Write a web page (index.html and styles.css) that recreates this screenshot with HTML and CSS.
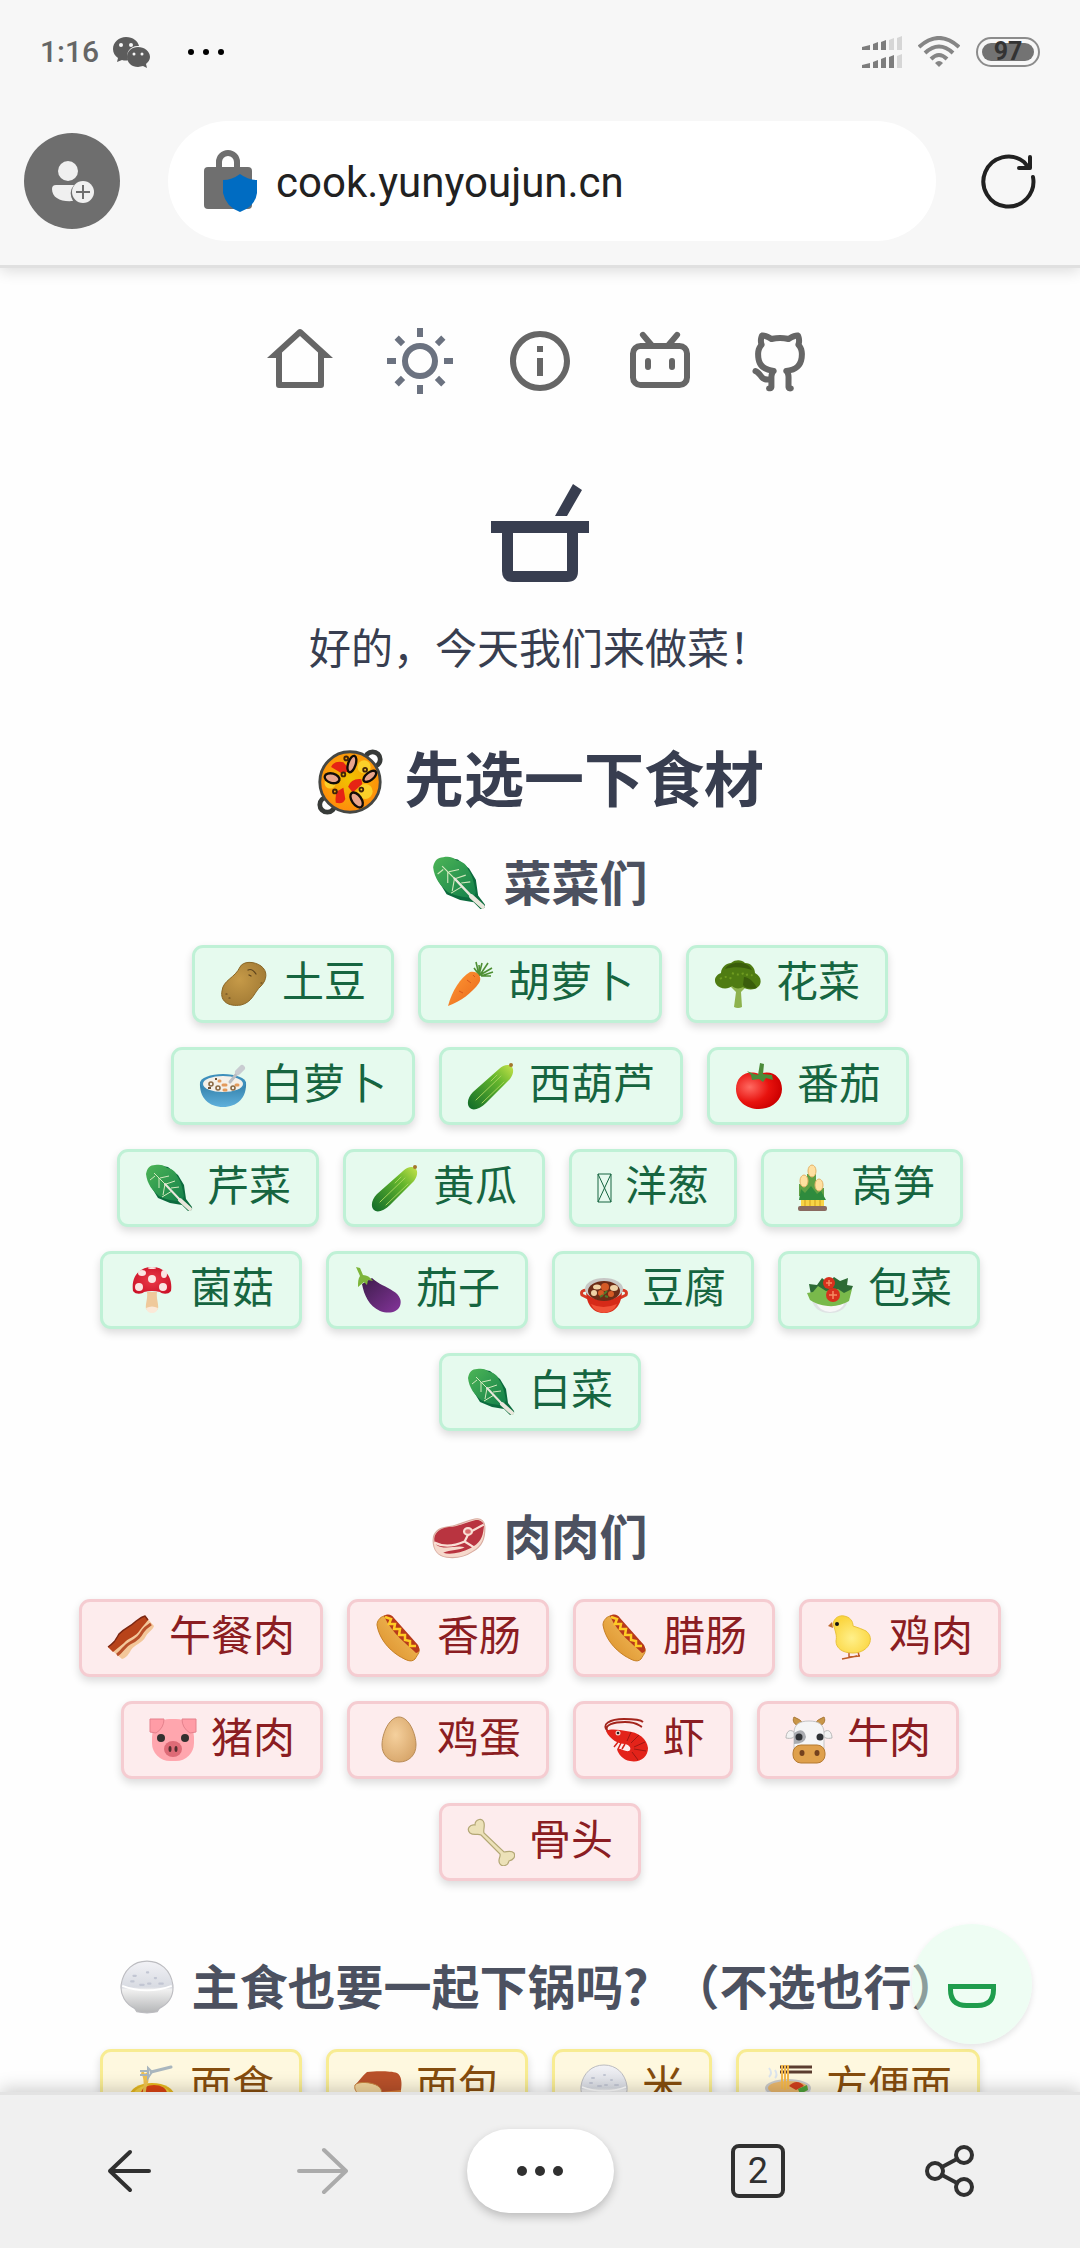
FILE: index.html
```
<!DOCTYPE html>
<html lang="zh-CN">
<head>
<meta charset="utf-8">
<meta name="viewport" content="width=device-width, initial-scale=1">
<title>好的，今天我们来做菜！</title>
<link rel="stylesheet" href="styles.css">
</head>
<body>
<svg class="sprite" aria-hidden="true">
  <defs>
    <linearGradient id="g-leaf" x1="0" y1="0" x2="1" y2="1"><stop offset="0" stop-color="#4db556"/><stop offset="1" stop-color="#13804a"/></linearGradient>
    <radialGradient id="g-potato" cx=".4" cy=".4" r=".7"><stop offset="0" stop-color="#c69a48"/><stop offset="1" stop-color="#9f7833"/></radialGradient>
    <linearGradient id="g-carrot" x1="0" y1="0" x2="1" y2="1"><stop offset="0" stop-color="#ff9a35"/><stop offset="1" stop-color="#e9661a"/></linearGradient>
    <linearGradient id="g-cuke" x1="1" y1="0" x2="0" y2="1"><stop offset="0" stop-color="#c6e34a"/><stop offset=".35" stop-color="#63b52c"/><stop offset="1" stop-color="#0f6a2a"/></linearGradient>
    <radialGradient id="g-tomato" cx=".3" cy=".4" r=".7"><stop offset="0" stop-color="#ff6a62"/><stop offset=".6" stop-color="#e8120e"/><stop offset="1" stop-color="#cc0000"/></radialGradient>
    <linearGradient id="g-bowl" x1="0" y1="0" x2="0" y2="1"><stop offset="0" stop-color="#2f7ba4"/><stop offset="1" stop-color="#5fb0dc"/></linearGradient>
    <linearGradient id="g-bun" x1="1" y1="0" x2="0" y2="1"><stop offset="0" stop-color="#f7c765"/><stop offset="1" stop-color="#d98a26"/></linearGradient>
    <radialGradient id="g-chick" cx=".5" cy=".6" r=".6"><stop offset="0" stop-color="#fff08a"/><stop offset="1" stop-color="#fbd43c"/></radialGradient>
    <radialGradient id="g-egg" cx=".4" cy=".4" r=".7"><stop offset="0" stop-color="#f5d09d"/><stop offset="1" stop-color="#d6a468"/></radialGradient>
    <radialGradient id="g-paella" cx=".5" cy=".45" r=".55"><stop offset="0" stop-color="#f0c400"/><stop offset="1" stop-color="#ff8a0c"/></radialGradient>
    <linearGradient id="g-rice" x1="0" y1="0" x2="0" y2="1"><stop offset="0" stop-color="#f2f2f6"/><stop offset=".5" stop-color="#d8dbe2"/><stop offset=".55" stop-color="#f1f1f1"/><stop offset="1" stop-color="#b4b5b7"/></linearGradient>
    <linearGradient id="g-eggplant" x1="0" y1="0" x2="1" y2="1"><stop offset="0" stop-color="#3d1d4b"/><stop offset="1" stop-color="#84349a"/></linearGradient>
    <radialGradient id="g-cap" cx=".5" cy=".5" r=".6"><stop offset="0" stop-color="#ea3a48"/><stop offset="1" stop-color="#cc1228"/></radialGradient>
  </defs>
  <symbol id="leaf" viewBox="0 0 48 48">
    <path fill="#0b6b3d" d="M13 1l10 2 10 8 6 10 2 14 6 8q1 4-4 4l-6-6-12-2-12-5-8-13z"/>
    <path fill="url(#g-leaf)" d="M1 10C2 4 5 1 10 1c5-1 9 0 12 3 6 1 9 4 10 8 4 5 5 11 7 20l-2 5c-9 0-18-2-23-5C8 27 2 20 1 10z"/>
    <path fill="none" stroke="#d3e8bd" stroke-width="1" d="M9 9l27 27M14 14l0 10M20 20l-2 11M27 27l-10 6M15 14l9-2M21 20l9-3M26 24l8-1M10 12l-5 4"/>
    <path fill="none" stroke="#e9e7dc" stroke-width="4" stroke-linecap="round" d="M35 36l10 9"/>
    <path fill="none" stroke="#e9e7dc" stroke-width="2" stroke-linecap="round" d="M20 20l16 17"/>
  </symbol>
  <symbol id="potato" viewBox="0 0 48 48">
    <path fill="url(#g-potato)" stroke="#8a6626" d="M20 7C23 1 34 1 41 6c7 5 6 14 0 20-7 6-8 16-20 19C8 47 0 41 2 31 3 20 15 18 20 7z"/>
    <path fill="none" stroke="#5d431c" stroke-width="1.2" stroke-linecap="round" d="M28 10q4-2 8 4M29 15l2 1M41 23h1M6 34h1M9 38h1"/>
  </symbol>
  <symbol id="carrot" viewBox="0 0 48 48">
    <path fill="none" stroke="#4e8f33" stroke-width="1.6" d="M33 15L30 2M33 15L36 3M34 15L42 3M34 15l12-7M35 16l12-4M34 16l-6-8M35 16l10 0M34 15L33 5"/>
    <path fill="url(#g-carrot)" d="M2 46C6 31 14 18 24 12c7-2 13 5 9 11C26 33 15 41 2 46z"/>
    <path fill="none" stroke="#d7571a" d="M21 20l4 3M13 31l4 2M27 15l2 2"/>
  </symbol>
  <symbol id="broccoli" viewBox="0 0 48 48">
    <path fill="#8db24d" d="M14 24l8 8-2 15q4 2 8 0l-1-15 8-8z"/>
    <path fill="#4f7c12" d="M2 24c-3-5 1-10 5-11 0-6 6-10 10-10 5-4 11-3 14 0 6 0 10 5 10 10 6 3 7 9 4 13-4 5-13 4-16 1-3 2-8 2-11-1-4 4-13 3-16-2z"/>
    <path fill="#3a5d0c" d="M11 9c4-8 23-9 27 1-8-3-18-4-27-1zM30 17c5 0 10 5 13 11-5 1-11 1-14-3z"/>
    <path fill="none" stroke="#6f9c20" stroke-width="2" stroke-dasharray="2 3" d="M6 19q6-4 12 0M18 13q6 3 12 0M32 15q5-2 9 3"/>
  </symbol>
  <symbol id="cereal" viewBox="0 0 48 48">
    <path fill="url(#g-bowl)" d="M1 20c-1 16 9 25 23 25s24-9 23-25z"/>
    <ellipse cx="24" cy="21" rx="23" ry="9" fill="#3d8fbc"/>
    <ellipse cx="24" cy="22" rx="20" ry="8" fill="#f4f0e9"/>
    <g fill="none" stroke="#8a6a45" stroke-width="1.6"><circle cx="12" cy="22" r="2"/><circle cx="19" cy="26" r="2"/><circle cx="34" cy="26" r="2"/></g>
    <path stroke="#e39a5b" stroke-width="3" stroke-linecap="round" d="M24 23h3M25 28h2M37 23h2M20 19h1"/>
    <path stroke="#6b5139" stroke-width="2" d="M9 26h3M16 17h2"/>
    <path stroke="#b9bdc2" stroke-width="3" stroke-linecap="round" d="M31 20l9-11"/>
    <path stroke="#c9ccd1" stroke-width="6" stroke-linecap="round" d="M39 10l4-4"/>
  </symbol>
  <symbol id="cuke" viewBox="0 0 48 48">
    <path fill="url(#g-cuke)" d="M3 46c-4-4-2-11 3-16L32 7c4-4 9-5 12-3s3 8-1 13L19 41C13 47 6 49 3 46z"/>
    <path fill="none" stroke="#a5d35a" stroke-linecap="round" d="M9 38L34 14M15 41L37 20M24 19l6-6"/>
    <circle cx="44" cy="3" r="2" fill="#a5762c"/>
  </symbol>
  <symbol id="tomato" viewBox="0 0 48 48">
    <path fill="url(#g-tomato)" d="M24 12c14-5 23 4 23 15S37 47 24 47 1 39 1 27 11 7 24 12z"/>
    <path fill="#4c8c3a" d="M23 13L25 1l4 1-1 10 9 1 1 5-7-2-3 4-4-3-7 1-1-5-4-4 7 3z"/>
  </symbol>
  <symbol id="kadomatsu" viewBox="0 0 48 48">
    <path fill="#5fa044" d="M18 10h9v20h-9zM10 20h8v12h-8zM27 24h8v10h-8z"/>
    <g fill="#ffe0a0" stroke="#e5b266"><ellipse cx="23" cy="7" rx="4" ry="6"/><ellipse cx="15" cy="17" rx="4" ry="6"/><ellipse cx="30" cy="21" rx="4" ry="6"/></g>
    <path fill="#2e8b3d" d="M12 25l4 4 6-7 6 8 4-3 5 9H10z"/>
    <path fill="#f8d446" d="M12 36h23v7H12z"/>
    <path stroke="#d39e1d" d="M16 36v7M21 36v7M26 36v7M31 36v7"/>
    <rect x="9" y="42" width="29" height="5" rx="2" fill="#8a6a60"/>
  </symbol>
  <symbol id="mushroom" viewBox="0 0 48 48">
    <path fill="#efc99b" d="M19 26h10c-1 7 2 12 1 17q-6 6-12 0c-1-5 2-10 1-17z"/>
    <path fill="#fbe9d8" d="M18 42q6-3 12 0-1 5-6 5t-6-5z"/>
    <path fill="url(#g-cap)" d="M5 25C3 11 11 1 24 1s21 10 19 24c-3 4-9 3-11 1q-8-2-16 0c-2 2-8 3-11-1z"/>
    <g fill="#fbe5e2"><circle cx="24" cy="13" r="4"/><circle cx="11" cy="21" r="4"/><circle cx="35" cy="21" r="4"/><ellipse cx="14" cy="7" rx="4" ry="3"/><ellipse cx="36" cy="8" rx="3" ry="4"/><ellipse cx="24" cy="2" rx="4" ry="1"/></g>
  </symbol>
  <symbol id="eggplant" viewBox="0 0 48 48">
    <path fill="url(#g-eggplant)" d="M8 18l10-6c6 6 14 8 21 13 7 4 9 10 7 15-3 7-12 8-20 5C15 40 10 29 8 18z"/>
    <path fill="#7db53a" d="M2 1l4 1 3 7c4 0 7 2 10 6l-5-1-1 5-3-3-6 5c0-5 0-8 2-11z"/>
  </symbol>
  <symbol id="hotpot" viewBox="0 0 48 48">
    <path fill="none" stroke="#d63a24" stroke-width="3" d="M7 24q-7 0-5 5l6 3M41 24q7 0 5 5l-6 3"/>
    <path fill="#d62a18" d="M6 24c0 16 8 23 18 23s18-7 18-23z"/>
    <path fill="#f05238" d="M11 38q12 6 26 0-3 8-13 9-10-1-13-9z"/>
    <ellipse cx="24" cy="23" rx="19" ry="11" fill="#c7c7c5"/>
    <ellipse cx="24" cy="25" rx="16" ry="10" fill="#6c2c17"/>
    <g fill="#efd2a6"><ellipse cx="17" cy="21" rx="4" ry="2.500"/><ellipse cx="34" cy="22" rx="4" ry="3"/><circle cx="14" cy="27" r="3"/></g>
    <g fill="#d55a25"><circle cx="25" cy="21" r="4"/><circle cx="31" cy="28" r="3"/><circle cx="21" cy="27" r="3"/></g>
    <path stroke="#4f7a2d" stroke-width="2" d="M20 31l3-2M27 25l-3 3M28 31l-3-1"/>
  </symbol>
  <symbol id="salad" viewBox="0 0 48 48">
    <path fill="#dfe3e4" d="M5 30q2 17 19 17t19-17z"/>
    <path fill="#f7f7f7" d="M10 36q14 8 29 0-3 9-15 10-11-1-14-10z"/>
    <path fill="#2d6b35" d="M3 18l8 1 5-7 6 5 6-6 6 4 8-3-1 7 6 1-4 9H5z"/>
    <path fill="#79b94b" d="M1 27l6-1 5-6 8 5 12-2 6 4 8-4-3 12q-10 6-21 5T4 34z"/>
    <g fill="#d8301d"><circle cx="23" cy="17" r="6"/><circle cx="27" cy="29" r="7"/></g>
    <path stroke="#f58c63" stroke-width="1.500" d="M20 17h6M23 14v6M23 29h8M27 25v8"/>
  </symbol>
  <symbol id="steak" viewBox="0 0 48 48">
    <path fill="#f6d9cc" stroke="#d9aca0" d="M1 27c0-7 5-11 13-12 10-1 14-5 24-7 6-1 9 2 9 8 0 9-2 16-11 21-6 4-15 6-23 5C6 41 1 36 1 27z"/>
    <path fill="#b93440" d="M2 25c1-6 6-9 13-10 9 0 14-4 23-6 5-1 9 2 8 7-1 9-3 13-12 18-8 4-18 6-24 4 6-3 15-2 19-5-8-2-18 3-25-2-2-2-2-4-2-6z"/>
    <path fill="none" stroke="#f9dfd5" stroke-width="2" d="M2 29c8 4 18 3 27-1l4-8 13-7M29 28l8 5"/>
    <ellipse cx="32" cy="19" rx="3.500" ry="3" fill="#d86c6c" stroke="#f9dfd5" stroke-width="2"/>
  </symbol>
  <symbol id="bacon" viewBox="0 0 48 48">
    <path fill="#f3c79a" d="M1 33c6-4 7-6 11-13 7-7 11-7 16-12 4-3 6-5 10-6l9 10c-1 4-5 5-8 10-4 8-11 8-15 14-2 4-5 8-9 9z"/>
    <path fill="#b8431a" d="M1 33c6-4 7-6 11-13 7-7 11-7 16-12 4-3 6-5 10-6l3 4c-3 4-5 6-8 10-4 7-12 8-16 13l-11 9z"/>
    <path fill="none" stroke="#7b2611" stroke-width="1.500" d="M1 33c6-4 7-6 11-13 7-7 11-7 16-12 4-3 6-5 10-6l3 4"/>
    <path fill="none" stroke="#b9502a" stroke-width="3" d="M10 41c6-4 7-9 13-12 8-4 10-7 13-12 3-4 5-5 8-7"/>
  </symbol>
  <symbol id="hotdog" viewBox="0 0 48 48">
    <path fill="url(#g-bun)" stroke="#c57f24" d="M9 2c3-1 6 0 8 3l26 28c3 4 0 7-3 12-4 4-9 1-16-3C13 35 4 24 2 11 2 7 5 3 9 2z"/>
    <path fill="#b83a1b" d="M9 2c4-3 8-1 10 2l24 27c2 4 2 7-2 8C32 30 17 20 9 2z"/>
    <path fill="none" stroke="#ffcb24" stroke-width="2.500" d="M10 3l6 2-2 5 6 0-1 5 6 0-1 6 6 0 0 5 5 1 0 5 6 0"/>
  </symbol>
  <symbol id="chick" viewBox="0 0 48 48">
    <path fill="none" stroke="#bf5d28" stroke-width="1.500" d="M22 38v5M31 37l1 5M15 45l15-3M22 43l11-1"/>
    <path fill="url(#g-chick)" stroke="#e9c23c" d="M6 10C7 4 12 1 17 2c6 1 9 5 9 10 6 2 9 3 13 5 4 3 5 7 4 11-2 7-9 11-17 11-11 0-17-5-17-12 1-5 0-8-3-17z"/>
    <path fill="#c06b2e" d="M5 8L1 12l5 2z"/>
    <circle cx="10" cy="10" r="2" fill="#111"/>
  </symbol>
  <symbol id="pig" viewBox="0 0 48 48">
    <rect x="3" y="3" width="42" height="42" rx="18" fill="#ffa6ae"/>
    <path fill="#ff9ca6" stroke="#e5828d" d="M1 3h14q0 9-8 14l-6-1zM47 3H33q0 9 8 14l6-1z"/>
    <circle cx="12" cy="22" r="4" fill="#33302f"/><circle cx="36" cy="22" r="4" fill="#33302f"/>
    <ellipse cx="24" cy="33" rx="9" ry="8" fill="#de6b77"/>
    <ellipse cx="21" cy="33" rx="1.500" ry="3" fill="#542f30"/><ellipse cx="27" cy="33" rx="1.500" ry="3" fill="#542f30"/>
  </symbol>
  <symbol id="egg" viewBox="0 0 48 48">
    <path fill="url(#g-egg)" stroke="#b98c57" d="M24 1c10 0 17 17 17 28 0 10-7 17-17 17S7 39 7 29C7 18 14 1 24 1z"/>
  </symbol>
  <symbol id="shrimp" viewBox="0 0 48 48">
    <path fill="none" stroke="#a3241c" stroke-width="1.800" d="M8 16C-2 8 10 3 23 3s18 2 19 3M6 14C4 9 12 6 24 6s13 3 17 5"/>
    <path fill="#e3231a" d="M5 15c5-3 14-1 20 0 13 1 21 8 22 17 0 9-8 15-18 13-7-1-12-7-13-12 4-1 8 3 12 2 3-2 1-6-4-7-6 0-15-4-19-13z"/>
    <path fill="none" stroke="#9f1712" d="M30 16l-4 9M38 19l-8 8M44 26l-11 5M45 35l-12-2M37 44l-6-8"/>
    <path fill="none" stroke="#d52018" stroke-width="1.500" d="M17 26l-4 5M20 27l-3 6M24 28l-3 5"/>
    <circle cx="17" cy="17" r="2.500" fill="#f6d5cc"/><circle cx="17" cy="17" r="1.300" fill="#222"/>
  </symbol>
  <symbol id="cow" viewBox="0 0 48 48">
    <path fill="#c99648" stroke="#a97837" d="M15 10C9 9 7 5 9 1q6 2 10 7zM33 10c6-1 8-5 6-9q-6 2-10 7z"/>
    <path fill="#f2f2f2" stroke="#b9b9b9" d="M9 16C4 12 1 17 1 22c5 1 8 0 9-3zM39 16c5-4 8 1 8 6-5 1-8 0-9-3z"/>
    <path fill="#f5f5f6" stroke="#c4c4c6" d="M9 34V17C9 8 15 5 24 5s15 3 15 12v17z"/>
    <path fill="#a9abb0" d="M9 17q10-7 12 4-1 7-12 7z"/>
    <circle cx="14" cy="21" r="3.500" fill="#2f3236"/><circle cx="35" cy="21" r="3.500" fill="#2f3236"/>
    <rect x="8" y="29" width="32" height="18" rx="8" fill="#dfa04c" stroke="#b57a31"/>
    <ellipse cx="17" cy="37" rx="2.500" ry="3" fill="#74411e"/><ellipse cx="32" cy="37" rx="2.500" ry="3" fill="#74411e"/>
  </symbol>
  <symbol id="bone" viewBox="0 0 48 48">
    <path fill="#ece1b8" stroke="#b3a775" stroke-width="1.200" d="M8 7C8 1 16-1 17 5c1 4-1 7 0 10l20 19c3 0 7-2 10 1 2 4-1 7-5 8-1 5-7 6-9 3-3-4 1-7 0-10L14 17c-3-2-7 1-11-2-4-4 0-9 5-8z"/>
  </symbol>
  <symbol id="rice" viewBox="0 0 48 48">
    <path fill="url(#g-rice)" stroke="#bcbcc0" d="M1 22C3 9 12 1 24 1s21 8 23 21c1 10-4 17-12 21l-2 3q-9 2-18 0l-2-3C5 39 0 31 1 22z"/>
    <path fill="none" stroke="#fff" stroke-width="1.500" d="M2 23q22 8 44 0"/>
    <path stroke="#c2c6d3" stroke-width="2" stroke-linecap="round" d="M12 14h2M10 19h2M18 22h3M25 21h2M35 21h3M31 16h1M24 11h1"/>
  </symbol>
  <symbol id="bread" viewBox="0 0 48 48">
    <path fill="#dc843d" d="M20 18h27v22L27 47z"/>
    <path fill="#b9512a" d="M2 20C5 17 9 11 13 8c9-1 24-1 30 1 5 3 5 11 4 17l-20 2z"/>
    <path fill="#f1d49c" stroke="#c8823f" d="M1 21c3-4 17-3 23 1 5 4 4 7 2 9v16H5V30c-3-2-5-5-4-9z"/>
  </symbol>
  <symbol id="pasta" viewBox="0 0 48 48">
    <ellipse cx="24" cy="33" rx="23" ry="14" fill="#e6b71f"/>
    <ellipse cx="24" cy="32" rx="19" ry="11" fill="#f3cf45"/>
    <ellipse cx="26" cy="29" rx="13" ry="8" fill="#dc4313"/>
    <path fill="none" stroke="#efc251" stroke-width="3" d="M14 8q5 6 2 22M18 9q3 5-1 14"/>
    <path fill="none" stroke="#a9b6be" stroke-width="2" d="M12 7h8M12 11h8M20 4v10l4-6z"/>
    <path stroke="#a9b6be" stroke-width="3" stroke-linecap="round" d="M23 8l20-5"/>
  </symbol>
  <symbol id="ramen" viewBox="0 0 48 48">
    <path fill="none" stroke="#dbe4ee" stroke-width="2" d="M5 4q4 5 0 9M11 6q3 5 0 8"/>
    <path stroke="#5b3d30" stroke-width="3" d="M16 3h32M16 8h32"/>
    <path fill="#e9e9e9" d="M1 24q2 23 23 23t23-23z"/>
    <ellipse cx="24" cy="24" rx="23" ry="9" fill="#c9c9c9"/>
    <ellipse cx="24" cy="24" rx="20" ry="7" fill="#e8b66c"/>
    <path fill="#cf3f1d" d="M25 22q8-8 15 0l-8 4z"/><path fill="#4fa23b" d="M34 25l9-4 1 5-8 4z"/>
    <path stroke="#f4b84a" stroke-width="2" d="M18 1v24M21 1v25M24 1v24"/>
  </symbol>
  <symbol id="paella" viewBox="0 0 72 72">
    <g fill="none" stroke="#373a38" stroke-width="5"><circle cx="60" cy="12" r="8"/><circle cx="12" cy="60" r="8"/></g>
    <circle cx="36" cy="36" r="32" fill="url(#g-paella)" stroke="#454744" stroke-width="3"/>
    <g fill="#fbd029"><circle cx="51" cy="20" r="7"/><circle cx="52" cy="46" r="8"/><circle cx="15" cy="37" r="6"/></g>
    <path fill="#e62414" d="M16 20q3-7 13-5l7 8q-8 6-12 2zM34 41q3-9 14-8l1 5-10 9zM22 46l7-4 2 12q-2 6-10 4-1-6 1-12z"/>
    <g fill="#e9a58c" stroke="#120c08" stroke-width="2.500"><ellipse cx="38" cy="17" rx="4" ry="9" transform="rotate(18 38 17)"/><ellipse cx="17" cy="32" rx="8" ry="5" transform="rotate(15 17 32)"/><ellipse cx="57" cy="30" rx="8" ry="4" transform="rotate(-38 57 30)"/><ellipse cx="43" cy="55" rx="5" ry="9" transform="rotate(-35 43 55)"/></g>
    <g fill="none" stroke="#41230a" stroke-width="2"><circle cx="32" cy="11" r="2"/><circle cx="52" cy="23" r="2"/><circle cx="20" cy="46" r="2"/><circle cx="48" cy="44" r="2"/><circle cx="29" cy="28" r="2"/></g>
  </symbol>
</svg>

<header class="top">
  <div class="status">
    <span class="clock">1:16</span>
    <svg class="wechat" viewBox="0 0 37 32" aria-hidden="true">
      <path fill="#5c5c5c" d="M13 1C6 1 0 6 0 13c0 4 2 7 5 9l-1 4 5-2q4 1 6 0c-3-8 3-15 11-14-1-5-6-9-13-9z"/>
      <path fill="#5c5c5c" d="M25 11c-6 0-11 4-11 10s5 10 11 10l5-1 4 2-1-4c2-2 4-4 4-7 0-6-6-10-12-10z"/>
      <g fill="#f7f7f7"><circle cx="8" cy="9" r="2"/><circle cx="18" cy="9" r="2"/><circle cx="21" cy="18" r="1.500"/><circle cx="29" cy="18" r="1.500"/></g>
    </svg>
    <svg class="more" viewBox="0 0 36 6" aria-hidden="true"><g fill="#000"><circle cx="3" cy="3" r="3"/><circle cx="18" cy="3" r="3"/><circle cx="33" cy="3" r="3"/></g></svg>
    <svg class="signal" viewBox="0 0 40 32" aria-hidden="true">
      <path fill="#7d7d7d" d="M0 11l8-2v5H0zM11 8l5-2v8h-5zM19 6l5-2v10h-5zM0 29l8-2v5H0zM11 26l5-2v8h-5zM19 23l5-2v11h-5zM27 21l5-2v13h-5z"/>
      <path fill="#d6d6d6" d="M27 4l5-2v12h-5zM35 2l5-2v14h-5zM35 20l5-2v14h-5z"/>
    </svg>
    <svg class="wifi" viewBox="0 0 42 32" aria-hidden="true">
      <g fill="none" stroke="#858585" stroke-width="4"><path d="M1 11Q21-7 41 11M7 17q14-13 28 0M13 23q8-8 16 0"/></g>
      <path fill="#858585" d="M17 27q4-4 8 0l-4 4z"/>
    </svg>
    <span class="battery"><span class="charge">97</span></span>
  </div>
  <div class="bar">
    <button class="avatar" aria-label="登录">
      <svg viewBox="0 0 96 96" aria-hidden="true">
        <circle cx="44" cy="38" r="10" fill="#f0f0f0"/>
        <path fill="#f0f0f0" d="M32 52h18q-6 7-1 16c-12 1-21-3-21-12q0-4 4-4z"/>
        <circle cx="59" cy="59" r="11" fill="#f0f0f0"/>
        <path stroke="#6e6e6e" stroke-width="2" d="M52 59h14M59 52v14"/>
      </svg>
    </button>
    <label class="address">
      <svg viewBox="0 0 54 64" aria-hidden="true">
        <path fill="none" stroke="#6f6f6f" stroke-width="6" d="M15 20v-7a9 9 0 0 1 18 0v7"/>
        <rect x="0" y="18" width="48" height="42" rx="4" fill="#6f6f6f"/>
        <path fill="#006cc2" d="M36 25q8 6 17 6v13q-2 14-17 19-14-5-17-19V31q9 0 17-6z"/>
      </svg>
      <input type="text" value="cook.yunyoujun.cn" aria-label="网址">
    </label>
    <button class="reload" aria-label="刷新">
      <svg viewBox="0 0 56 56" aria-hidden="true"><g fill="none" stroke="#212121" stroke-width="4" stroke-linecap="round" stroke-linejoin="round"><path d="M53 24A25 25 0 1 1 44 9l5 6"/><path d="M50 4v11H39"/></g></svg>
    </button>
  </div>
</header>

<main>
  <nav>
    <a href="#" aria-label="首页"><svg viewBox="0 0 24 24"><path d="M19 21H5a1 1 0 0 1-1-1v-9H1l10.327-9.388a1 1 0 0 1 1.346 0L23 11h-3v9a1 1 0 0 1-1 1M6 19h12V9.157l-6-5.454l-6 5.454z"/></svg></a>
    <a href="#" aria-label="主题" class="sun"><svg viewBox="0 0 24 24"><path d="M12 18a6 6 0 1 1 0-12a6 6 0 0 1 0 12m0-2a4 4 0 1 0 0-8a4 4 0 0 0 0 8M11 1h2v3h-2zm0 19h2v3h-2zM3.515 4.929l1.414-1.414L7.050 5.636L5.636 7.050zM16.950 18.364l1.414-1.414l2.121 2.121l-1.414 1.414zm2.121-14.850l1.414 1.415l-2.121 2.121l-1.414-1.414zM5.636 16.950l1.414 1.414l-2.121 2.121l-1.414-1.414zM23 11v2h-3v-2zM4 11v2H1v-2z"/></svg></a>
    <a href="#" aria-label="关于"><svg viewBox="0 0 24 24"><path d="M12 22C6.477 22 2 17.523 2 12S6.477 2 12 2s10 4.477 10 10s-4.477 10-10 10m0-2a8 8 0 1 0 0-16a8 8 0 0 0 0 16M11 7h2v2h-2zm0 4h2v6h-2z"/></svg></a>
    <a href="#" aria-label="哔哩哔哩"><svg viewBox="0 0 24 24"><g fill="none" stroke="currentColor" stroke-width="2"><rect x="3" y="7" width="18" height="13" rx="2.500"/><path stroke-linecap="round" d="M6.300 3.300L9 6.500M17.700 3.300L15 6.500M8 12v2M16 12v2"/></g></svg></a>
    <a href="#" aria-label="GitHub"><svg viewBox="0 0 24 24"><path d="M5.883 18.653c-.3-.2-.558-.455-.86-.816a50.320 50.320 0 0 1-.466-.579c-.463-.575-.755-.84-1.057-.949a1 1 0 0 1 .676-1.883c.752.27 1.261.735 1.947 1.588c-.094-.117.34.427.433.539c.19.227.33.365.44.438c.204.137.587.196 1.150.14c.023-.382.094-.753.202-1.095C5.380 15.310 3.700 13.396 3.700 9.640c0-1.240.37-2.356 1.058-3.292c-.218-.894-.185-1.975.302-3.192a1 1 0 0 1 .63-.582c.081-.024.127-.035.208-.047c.803-.123 1.937.17 3.415 1.096A11.731 11.731 0 0 1 12 3.315c.912 0 1.818.104 2.684.308c1.477-.933 2.613-1.226 3.422-1.096c.085.013.157.03.218.05a1 1 0 0 1 .616.58c.487 1.216.52 2.297.302 3.190c.691.936 1.058 2.045 1.058 3.293c0 3.757-1.674 5.665-4.642 6.392c.125.415.19.879.19 1.380a300.492 300.492 0 0 1-.012 2.716a1 1 0 0 1-.019 1.958c-1.139.228-1.983-.532-1.983-1.525l.002-.446l.005-.705c.005-.708.007-1.338.007-1.998c0-.697-.183-1.152-.425-1.360c-.661-.57-.326-1.655.54-1.752c2.967-.333 4.337-1.482 4.337-4.660c0-.955-.312-1.744-.913-2.404a1 1 0 0 1-.19-1.045c.166-.414.237-.957.096-1.614l-.01.003c-.491.139-1.110.44-1.858.949a1 1 0 0 1-.833.135A9.626 9.626 0 0 0 12 5.315c-.89 0-1.772.119-2.592.35a1 1 0 0 1-.83-.134c-.752-.507-1.374-.807-1.868-.947c-.144.653-.073 1.194.092 1.607a1 1 0 0 1-.189 1.045C6.016 7.890 5.700 8.694 5.700 9.640c0 3.172 1.371 4.328 4.322 4.660c.865.097 1.201 1.177.544 1.748c-.192.168-.429.732-.429 1.364v3.150c0 .986-.835 1.725-1.960 1.528a1 1 0 0 1-.04-1.962v-.99c-.91.061-1.662-.088-2.254-.485"/></svg></a>
  </nav>

  <svg class="logo" viewBox="0 0 98 98" aria-hidden="true">
    <path fill="currentColor" d="M82 0l9 6-15 26H64zM0 37h98v12H87v38q0 11-11 11H22q-11 0-11-11V49H0zm22 12v38h54V49z"/>
  </svg>
  <p class="intro">好的，今天我们来做菜！</p>
  <h1><svg><use href="#paella"/></svg>先选一下食材</h1>

  <section class="vegetable">
    <h2><svg><use href="#leaf"/></svg>菜菜们</h2>
    <div class="chips">
      <button><svg><use href="#potato"/></svg><span>土豆</span></button>
      <button><svg><use href="#carrot"/></svg><span>胡萝卜</span></button>
      <button><svg><use href="#broccoli"/></svg><span>花菜</span></button>
      <button><svg><use href="#cereal"/></svg><span>白萝卜</span></button>
      <button><svg><use href="#cuke"/></svg><span>西葫芦</span></button>
      <button><svg><use href="#tomato"/></svg><span>番茄</span></button>
      <button><svg><use href="#leaf"/></svg><span>芹菜</span></button>
      <button><svg><use href="#cuke"/></svg><span>黄瓜</span></button>
      <button><svg class="missing" viewBox="0 0 15 30"><path fill="none" stroke="currentColor" d="M1 1h13v28H1zL14 29M14 1L1 29"/></svg><span>洋葱</span></button>
      <button><svg><use href="#kadomatsu"/></svg><span>莴笋</span></button>
      <button><svg><use href="#mushroom"/></svg><span>菌菇</span></button>
      <button><svg><use href="#eggplant"/></svg><span>茄子</span></button>
      <button><svg><use href="#hotpot"/></svg><span>豆腐</span></button>
      <button><svg><use href="#salad"/></svg><span>包菜</span></button>
      <button><svg><use href="#leaf"/></svg><span>白菜</span></button>
    </div>
  </section>

  <section class="meat">
    <h2><svg><use href="#steak"/></svg>肉肉们</h2>
    <div class="chips">
      <button><svg><use href="#bacon"/></svg><span>午餐肉</span></button>
      <button><svg><use href="#hotdog"/></svg><span>香肠</span></button>
      <button><svg><use href="#hotdog"/></svg><span>腊肠</span></button>
      <button><svg><use href="#chick"/></svg><span>鸡肉</span></button>
      <button><svg><use href="#pig"/></svg><span>猪肉</span></button>
      <button><svg><use href="#egg"/></svg><span>鸡蛋</span></button>
      <button><svg><use href="#shrimp"/></svg><span>虾</span></button>
      <button><svg><use href="#cow"/></svg><span>牛肉</span></button>
      <button><svg><use href="#bone"/></svg><span>骨头</span></button>
    </div>
  </section>

  <section class="staple">
    <h2><svg><use href="#rice"/></svg>主食也要一起下锅吗？（不选也行）</h2>
    <div class="chips">
      <button><svg><use href="#pasta"/></svg><span>面食</span></button>
      <button><svg><use href="#bread"/></svg><span>面包</span></button>
      <button><svg><use href="#rice"/></svg><span>米</span></button>
      <button><svg><use href="#ramen"/></svg><span>方便面</span></button>
    </div>
  </section>
</main>

<button class="fab" aria-label="查看菜谱">
  <svg viewBox="0 0 48 24" aria-hidden="true"><path fill="none" stroke="#1f9d4d" stroke-width="5" d="M2.500 2.500h43v3q0 16-16 16h-11q-16 0-16-16z"/></svg>
</button>

<footer class="toolbar">
  <button aria-label="后退"><svg class="back" viewBox="0 0 48 48"><path d="M43 24H4M24 5L4 24l20 19"/></svg></button>
  <button aria-label="前进"><svg class="forward" viewBox="0 0 52 48"><path d="M3 24h47M28 3l22 21-22 21"/></svg></button>
  <button class="menu" aria-label="菜单"><svg viewBox="0 0 46 10"><g><circle cx="5" cy="5" r="5"/><circle cx="23" cy="5" r="5"/><circle cx="41" cy="5" r="5"/></g></svg></button>
  <button aria-label="标签页"><span class="tabs">2</span></button>
  <button aria-label="分享"><svg class="share" viewBox="0 0 50 54"><g><circle cx="10" cy="27" r="8"/><circle cx="39" cy="11" r="8"/><circle cx="39" cy="43" r="8"/><path d="M17 23l15-8M17 31l15 8"/></g></svg></button>
</footer>
</body>
</html>
```
FILE: styles.css
```
* { box-sizing: border-box; margin: 0; padding: 0; }

body {
  display: flex;
  flex-direction: column;
  height: 100vh;
  overflow: hidden;
  background: #fefefe;
  color: #383e50;
  font-family: "Noto Sans CJK SC", "Noto Sans", sans-serif;
}

button { border: 0; background: none; font: inherit; color: inherit; }
svg { display: block; flex: none; }
.sprite { position: absolute; width: 0; height: 0; }

/* status bar and address bar */
.top {
  z-index: 1;
  background: #f7f7f7;
  box-shadow: 0 3px 0 #e0e0e0, 0 6px 14px rgba(0, 0, 0, .14);
  font-family: Roboto, sans-serif;
}
.status {
  display: flex;
  align-items: center;
  height: 103px;
  padding: 0 40px;
}
.clock { font-size: 30px; font-weight: 500; color: #666; }
.wechat { width: 37px; height: 32px; margin-left: 14px; }
.more { width: 36px; height: 6px; margin-left: 38px; }
.signal { width: 40px; height: 32px; margin-left: auto; }
.wifi { width: 42px; height: 32px; margin: 0 16px; }
.battery {
  width: 64px;
  height: 30px;
  padding: 4px;
  border: 2px solid #8c8c8c;
  border-radius: 15px;
}
.charge {
  display: block;
  border-radius: 10px;
  background: #737373;
  color: #333;
  font-size: 25px;
  font-weight: 700;
  line-height: 18px;
  text-align: center;
}
.bar {
  display: flex;
  align-items: center;
  padding: 18px 44px 24px 24px;
}
.avatar { width: 96px; height: 96px; border-radius: 50%; background: #6e6e6e; }
.address {
  display: flex;
  flex: 1;
  align-items: center;
  gap: 18px;
  height: 120px;
  margin: 0 44px 0 48px;
  padding: 0 36px;
  border-radius: 60px;
  background: #fff;
}
.address svg { width: 54px; height: 64px; }
.address input {
  flex: 1;
  min-width: 0;
  padding-top: 3px;
  border: 0;
  outline: 0;
  background: none;
  color: #212121;
  font: 42px Roboto, sans-serif;
}
.reload svg { width: 56px; height: 56px; }

/* page */
main {
  flex: 1;
  min-height: 0;
  overflow: hidden;
  padding: 60px 64px 0;
  text-align: center;
}
nav { display: flex; justify-content: center; gap: 48px; color: #666; }
nav a { color: inherit; }
nav .sun { color: #6b7280; }
nav svg { width: 72px; height: 72px; fill: currentColor; }
.logo { width: 98px; height: 98px; margin: 87px auto 34px; }
.intro { font-size: 42px; line-height: 60px; }
h1, h2 { display: flex; justify-content: center; align-items: center; white-space: nowrap; }
h1 { margin-top: 60px; font-size: 60px; line-height: 80px; }
h1 svg { width: 68px; height: 68px; margin: 12px 20px 0 0; }
h2 { margin: 34px 0 35px; font-size: 48px; line-height: 60px; color: #4c5160; }
h2 svg { width: 54px; height: 54px; margin: 6px 17px 0 0; }
section + section h2 { margin-top: 73px; }

.chips { display: flex; flex-wrap: wrap; justify-content: center; gap: 24px; }
.chips button {
  display: flex;
  padding: 12px 25px;
  border: 3px solid;
  border-radius: 11px;
  box-shadow: 0 4px 8px rgba(0, 0, 0, .14);
  font-size: 42px;
  line-height: 38px;
}
.chips svg { width: 48px; height: 48px; margin-right: 14px; }
.chips .missing { width: 15px; height: 30px; margin: 9px 13px 0 0; }
.vegetable button { border-color: #bff1d6; background: #e6faee; color: #166540; }
.meat button { border-color: #f5ccd1; background: #fdeced; color: #8b1d22; }
.staple button { border-color: #f8ec92; background: #fef8df; color: #854d0e; }

.fab {
  position: fixed;
  right: 48px;
  bottom: 204px;
  display: grid;
  place-items: center;
  width: 120px;
  height: 120px;
  border-radius: 50%;
  background: rgba(220, 252, 231, .45);
  box-shadow: 0 3px 6px rgba(0, 0, 0, .1);
}
.fab svg { width: 48px; height: 24px; margin-top: 24px; }

/* browser toolbar */
.toolbar {
  z-index: 1;
  display: flex;
  justify-content: space-between;
  align-items: center;
  height: 156px;
  padding: 0 82px 2px;
  border-top: 3px solid #e3e3e3;
  background: #f0f0f0;
  box-shadow: 0 -4px 16px rgba(0, 0, 0, .18);
}
.toolbar button { display: grid; place-items: center; width: 96px; height: 84px; }
.toolbar svg { width: 48px; height: 48px; fill: none; stroke: #303030; stroke-width: 4; stroke-linecap: round; stroke-linejoin: round; }
.toolbar .forward { width: 52px; stroke: #ababab; }
.toolbar .share { width: 50px; height: 54px; }
.toolbar .menu { width: 147px; border-radius: 42px; background: #fff; box-shadow: 0 4px 10px rgba(0, 0, 0, .22); }
.toolbar .menu svg { width: 46px; height: 10px; stroke: none; fill: #303030; }
.tabs {
  width: 54px;
  height: 54px;
  border: 4px solid #303030;
  border-radius: 8px;
  color: #303030;
  font: 36px/46px Roboto, sans-serif;
}
```
